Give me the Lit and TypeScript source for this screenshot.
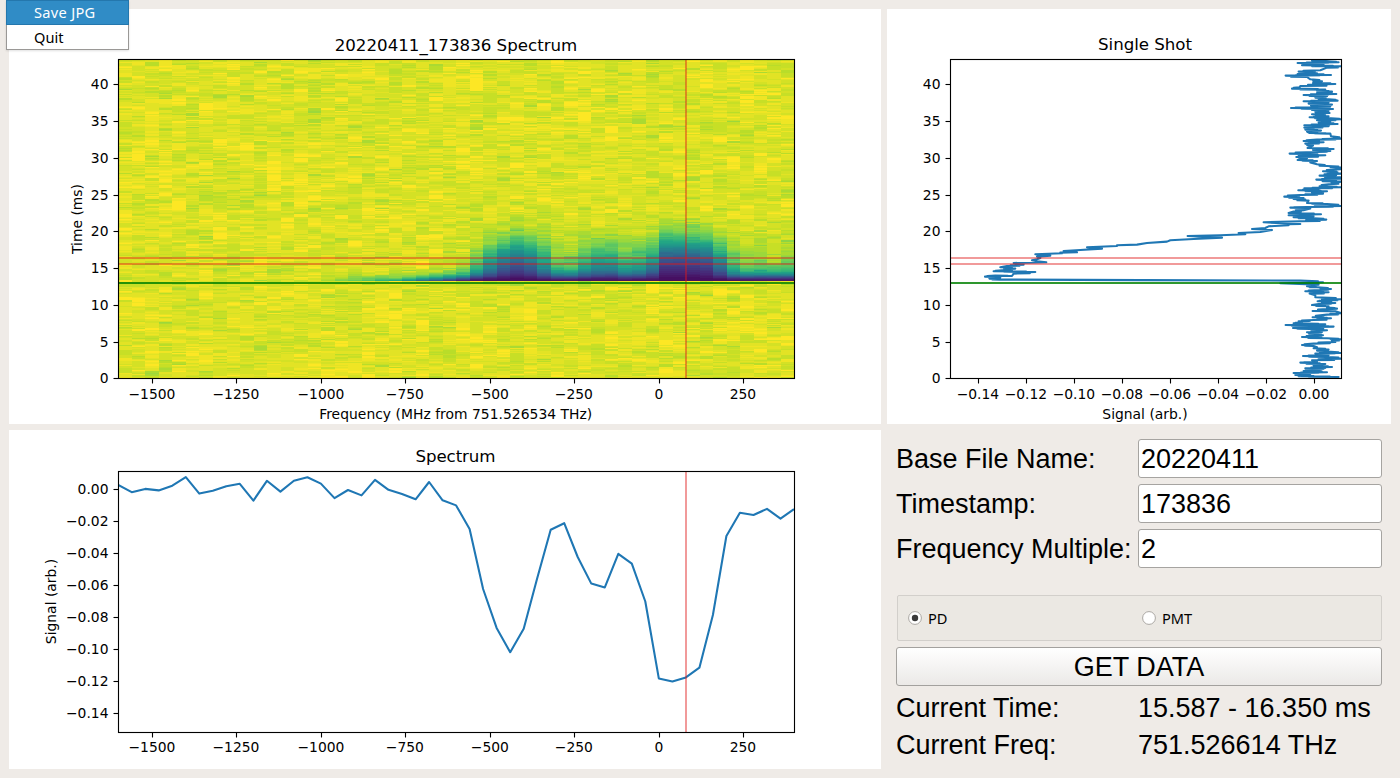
import { LitElement, html, svg, css } from "lit";
import { customElement, property } from "lit/decorators.js";

const VIRIDIS = [
  [68, 1, 84], [72, 35, 116], [64, 67, 135], [52, 94, 141], [41, 120, 142], [32, 144, 140],
  [34, 167, 132], [68, 190, 112], [121, 209, 81], [189, 222, 38], [253, 231, 36],
];

function viridis(v: number): string {
  const p = Math.max(0, Math.min(0.99999, v)) * 10;
  const i = Math.floor(p);
  const f = p - i;
  const c = VIRIDIS[i].map((a, n) => Math.round(a + (VIRIDIS[i + 1][n] - a) * f));
  return `rgb(${c.join(",")})`;
}

// Spectrum trace heights, one per 40 MHz step from -1600 to 400 MHz.
const SPECTRUM_Y = [
  485, 492.2, 488.9, 490.4, 485.7, 477.2, 493.6, 490.7, 486.2, 483.8, 500.6, 480.8, 491.6, 480.8,
  477.3, 483.6, 498.1, 490, 495.4, 479.9, 489.8, 494, 499.3, 482, 500.3, 505.4, 529, 589, 627.9,
  652.2, 628.7, 578.3, 529.7, 523.2, 557, 583.6, 587.4, 553.8, 563.6, 601.5, 678.4, 681.4, 677.4,
  667.7, 615, 536, 512.7, 515, 508.9, 518.7, 509.2,
];
const STEP = 13.516;
const spectrumPath = "M" + SPECTRUM_Y.map((y, k) => `${(118.2 + k * STEP).toFixed(1)} ${y}`).join("L");

// Single shot trace, in thirds of a pixel: upper part, then lower part.
const SHOT_A = `1170,26 1115,31 1160,33 1195,36 1072,38 1150,43 1085,45 1204,48 1160,52 1140,60 1075,64 1130,69
1072,71 1172,74 1036,76 1100,80 1110,87 1145,93 1118,98 1185,101 1080,107 1078,111 1055,115 1155,118 1130,121
1175,124 1130,128 1188,131 1090,134 1160,138 1125,142 1165,147 1192,151 1090,153 1165,157 1105,160 1175,163
1112,166 1170,169 1115,171 1052,173 1178,176 1115,179 1165,182 1125,185 1168,188 1115,192 1165,198 1108,201
1172,204 1204,207 1130,210 1170,214 1135,217 1192,221 1092,225 1165,228 1092,232 1120,236 1095,238 1142,241
1100,244 1108,248 1170,250 1172,258 1204,265 1130,268 1090,272 1150,276 1095,280 1118,286 1102,293 1180,296
1118,299 1170,302 1130,305 1048,310 1155,315 1068,320 1100,324 1072,329 1130,332 1110,337 1130,342 1160,347
1204,352 1200,357 1148,363 1204,370 1138,376 1200,381 1204,385 1128,388 1204,394 1165,402 1138,408 1204,411
1092,414 1135,417 1074,420 1160,423 1115,427 1148,430 1080,434 1032,439 1090,443 1060,446 1105,451 1100,458
1160,461 1204,467 1100,470 1050,472 1110,475 1090,480`;
const SHOT_B = `1060,4 1045,8 1142,12 1045,15 1120,18 1060,21 1120,24 1158,28 1080,33 970,36 1080,41 1035,42 1045,45
985,48 975,53 935,56 995,59 960,65 895,68 915,72 840,75 742,77 845,82 760,86 690,90 680,94 620,98 590,103
530,105 530,107 440,111 485,115 420,119 370,122 410,126 360,127 365,129 285,132 330,136 290,139 300,143 290,147
275,150 290,153 318,156 220,158 250,163 200,167 180,171 225,175 185,180 160,183 285,185 220,190 215,197 165,196
134,199 180,202 148,205 180,208 600,209.5 1080,211 1148,216 1020,219 1135,223 1100,228 1130,231 1172,236
1140,239 1095,243 1165,246 1108,250 1125,255 1125,261 1204,267 1155,270 1132,273 1185,278 1135,281 1115,284
1165,288 1160,292 1190,295 1117,302 1185,303 1204,309 1160,313 1117,321 1172,324 1120,329 1075,333 1085,336
1060,339 1155,342 1036,344 1110,347 1180,349 1058,353 1110,356 1160,360 1100,366 1125,371 1148,375 1085,380
1160,384 1204,387 1175,391 1185,395 1120,400 1085,404 1120,407 1130,411 1120,414 1165,418 1130,421 1160,424
1204,428 1125,430 1165,435 1088,437 1160,440 1204,445 1115,450 1130,455 1080,457 1155,461 1120,466 1175,470
1095,474 1150,476 1115,479 1090,482 1160,486 1060,488 1110,491 1065,494 1120,497 1075,498 1195,500 1130,505`;
const toPx = (s: string, oy: number) =>
  s.trim().split(/\s+/).map((p) => {
    const [x, y] = p.split(",").map(Number);
    return [940.3 + x / 3, oy + y / 3];
  });

// Between two far-apart noise samples the trace doubles back once.
function jitter(pts: number[][]): number[][] {
  const out: number[][] = [];
  pts.forEach(([x, y], i) => {
    out.push([x, y]);
    const next = pts[i + 1];
    if (!next) return;
    const dx = next[0] - x;
    const dy = next[1] - y;
    const noisy = (x > 1284 && next[0] > 1284) || (x < 1040 && next[0] < 1040);
    if (noisy && Math.abs(dx) > 7) {
      out.push([x + dx * 0.78, y + dy * 0.4], [x + dx * 0.25, y + dy * 0.8]);
    }
  });
  return out;
}
const shotPath = "M" + jitter([...toPx(SHOT_A, 50.3), ...toPx(SHOT_B, 210.3)])
  .map(([x, y]) => `${x.toFixed(1)} ${y.toFixed(1)}`).join("L");

// Waterfall cells: noisy baseline plus an absorption that relaxes after the 13.3 ms pulse.
function heatCells() {
  let seed = 20220411;
  const rnd = () => {
    seed = (seed * 1664525 + 1013904223) >>> 0;
    return seed / 4294967296;
  };
  const gauss = () => rnd() + rnd() + rnd() + rnd() - 2;
  const LEVELS = 48;
  const paths: string[] = Array.from({ length: LEVELS }, () => "");
  for (let k = 0; k < 50; k++) {
    const a = Math.max(0, (489.5 - SPECTRUM_Y[k]) / -1600);
    const base = k < 24 ? 0 : Math.min(0.93, Math.max(0, a - 0.003) / 0.137);
    const tau16 = -Math.log(1 - base);
    const burst = k < 15 ? 0 : k < 26 ? 0.15 * Math.exp((k - 15) * 0.3) : 4;
    const xa = Math.round(118.4 + k * STEP);
    const xb = Math.round(118.4 + (k + 1) * STEP);
    let slow = 0;
    let held = 0;
    for (let y = 59; y < 379; y++) {
      const t = (378 - y) / 7.34;
      if (rnd() < 0.6) held = gauss();
      slow = slow * 0.86 + gauss() * 0.5;
      let v = 0.947 + held * 0.044 + slow * 0.026;
      if (t > 13.25) {
        const dt = t - 13.25;
        const fast = burst * Math.exp(-dt / 0.42);
        const tau =
          tau16 * Math.exp(-0.059 * (dt * dt - 7.3)) + fast + (k > 25 ? 0.3 * Math.exp(-dt / 2) : 0);
        const floor = 0.03 + 0.1 * Math.exp(-fast) * Math.min(1, dt / 3);
        v = v * Math.exp(-tau) + floor * (1 - Math.exp(-tau));
      }
      const q = Math.max(0, Math.min(LEVELS - 1, Math.round(v * (LEVELS - 1))));
      paths[q] += `M${xa} ${y}h${xb - xa}v1h${xa - xb}z`;
    }
  }
  return paths.map((d, q) => (d ? svg`<path d=${d} fill=${viridis(q / (LEVELS - 1))} />` : null));
}

type Tick = [number, string];
interface Frame { l: number; t: number; r: number; b: number; drop: number; }

function axes(f: Frame, xs: Tick[], ys: Tick[]) {
  return svg`
    <rect class="spine" x=${f.l + 0.5} y=${f.t + 0.5} width=${f.r - f.l} height=${f.b - f.t} />
    ${xs.map(([x, s]) => svg`
      <path class="spine" d="M${x} ${f.b + 1}v4.5" />
      <text class="tick" x=${x - 0.6} y=${f.b + f.drop} text-anchor="middle">${s}</text>`)}
    ${ys.map(([y, s]) => svg`
      <path class="spine" d="M${f.l} ${y}h-4.5" />
      <text class="tick" x=${f.l - 9.5} y=${y + 4.8} text-anchor="end">${s}</text>`)}`;
}

const FREQ: Tick[] = [
  [152.5, "−1500"], [236.5, "−1250"], [321.5, "−1000"], [405.5, "−750"],
  [490.5, "−500"], [574.5, "−250"], [659.5, "0"], [743.5, "250"],
];
const TIME: Tick[] = [
  [378.5, "0"], [342.5, "5"], [305.5, "10"], [268.5, "15"], [231.5, "20"],
  [195.5, "25"], [158.5, "30"], [121.5, "35"], [84.5, "40"],
];
const AMPL: Tick[] = [0, 2, 4, 6, 8, 10, 12, 14].map(
  (n) => [489.5 + n * 16, (n ? "−" : "") + (n / 100).toFixed(2)] as Tick);
const SHOT_X: Tick[] = [14, 12, 10, 8, 6, 4, 2, 0].map(
  (n) => [1314.5 - n * 24, (n ? "−" : "") + (n / 100).toFixed(2)] as Tick);

@customElement("lab-plot")
class LabPlot extends LitElement {
  @property() kind = "waterfall";

  static styles = css`
    :host { display: block; background: #fff; overflow: hidden; }
    svg { display: block; width: 100%; height: 100%; }
    text { font-family: "DejaVu Sans", sans-serif; fill: #000; }
    .tick, .label { font-size: 13.89px; }
    .title { font-size: 16.67px; }
    .spine { fill: none; stroke: #000; stroke-width: 1.11; }
    .trace { fill: none; stroke: #1f77b4; stroke-width: 2.08; stroke-linejoin: round; }
    .mark { stroke: #e01818; stroke-opacity: 0.44; stroke-width: 2; }
    .pulse { stroke: #008000; stroke-opacity: 0.82; stroke-width: 2; }
  `;

  render() {
    if (this.kind === "shot") {
      return html`<svg viewBox="887 9 504 415">
        <clipPath id="c"><rect x="950.5" y="59.5" width="391" height="319" /></clipPath>
        <g clip-path="url(#c)">
          <path class="trace" d=${shotPath} />
          <path class="mark" d="M950 258H1342" /><path class="mark" d="M950 264H1342" />
          <path class="pulse" d="M950 283H1342" />
        </g>
        ${axes({ l: 950, t: 59, r: 1341, b: 378, drop: 21 }, SHOT_X, TIME)}
        <text class="title" x="1145" y="50" text-anchor="middle" textLength="94">Single Shot</text>
        <text class="label" x="1145" y="419" text-anchor="middle">Signal (arb.)</text>
      </svg>`;
    }
    if (this.kind === "spectrum") {
      return html`<svg viewBox="9 430 872 339">
        <clipPath id="c"><rect x="118.5" y="471.5" width="676" height="261" /></clipPath>
        <g clip-path="url(#c)">
          <path class="trace" d=${spectrumPath} />
          <path class="mark" d="M686 471V733" />
        </g>
        ${axes({ l: 118, t: 471, r: 794, b: 732, drop: 20 }, FREQ, AMPL)}
        <text class="title" x="455.5" y="462" text-anchor="middle" textLength="80">Spectrum</text>
        <text class="label" transform="translate(56 601.5) rotate(-90)" text-anchor="middle">Signal (arb.)</text>
      </svg>`;
    }
    return html`<svg viewBox="9 9 872 415">
      <clipPath id="c"><rect x="118" y="59" width="677" height="320" /></clipPath>
      <g clip-path="url(#c)">
        <g shape-rendering="crispEdges">${heatCells()}</g>
        <path class="mark" d="M118 258H795" /><path class="mark" d="M118 264H795" />
        <path class="mark" d="M686 59V379" />
        <path class="pulse" d="M118 283H795" />
      </g>
      ${axes({ l: 118, t: 59, r: 794, b: 378, drop: 21 }, FREQ, TIME)}
      <text class="title" x="456" y="51" text-anchor="middle">20220411_173836 Spectrum</text>
      <text class="label" x="455.7" y="419" text-anchor="middle" textLength="273">Frequency (MHz from 751.526534 THz)</text>
      <text class="label" transform="translate(82 219) rotate(-90)" text-anchor="middle">Time (ms)</text>
    </svg>`;
  }
}

@customElement("control-panel")
class ControlPanel extends LitElement {
  static styles = css`
    :host {
      display: block; box-sizing: border-box; padding: 9px 9px 0;
      font: 27px/31px "Liberation Sans", Arial, sans-serif; color: #000;
    }
    .form { display: grid; grid-template-columns: 242px 244px; row-gap: 6px; align-items: center; white-space: nowrap; }
    .form span { padding-top: 1px; margin-bottom: -1px; }
    .status span { padding-top: 0; margin-bottom: 0; }
    input {
      box-sizing: border-box; width: 100%; height: 39px; margin: 0; padding: 1px 2px 0;
      font: inherit; color: inherit; background: #fff; border: 1px solid #a6a4a1;
      border-radius: 3px; outline: none;
    }
    .source {
      display: grid; grid-template-columns: 234px 1fr; align-items: center; box-sizing: border-box;
      height: 46px; margin: 27px 0 6px 1px; padding: 0 10px; border: 1px solid #d2cfcb;
      border-radius: 2px; background: #ebe8e3; font: 14.6px/18px "Noto Sans", sans-serif;
    }
    .option { display: flex; align-items: center; gap: 6px; }
    .dot { display: block; width: 14px; height: 14px; }
    .get {
      display: block; box-sizing: border-box; width: 100%; height: 39px; padding: 1px 0 0; font: inherit;
      color: #000; background: linear-gradient(#fff, #ebe9e7); border: 1px solid #a3a19e; border-radius: 3px;
    }
    .status { margin-top: 7px; }
  `;

  private radio(label: string, on: boolean) {
    return html`<div class="option">
      <svg class="dot" viewBox="0 0 14 14">
        <circle cx="7" cy="7" r="6.4" fill="#fff" stroke="#aaa7a3" />
        ${on ? svg`<circle cx="7" cy="7" r="3.2" fill="#3a3a3a" />` : null}
      </svg><span>${label}</span>
    </div>`;
  }

  render() {
    return html`
      <div class="form">
        <span>Base File Name:</span><input .value=${"20220411"} />
        <span>Timestamp:</span><input .value=${"173836"} />
        <span>Frequency Multiple:</span><input .value=${"2"} />
      </div>
      <div class="source">${this.radio("PD", true)}${this.radio("PMT", false)}</div>
      <button class="get">GET DATA</button>
      <div class="form status">
        <span>Current Time:</span><span>15.587 - 16.350 ms</span>
        <span>Current Freq:</span><span>751.526614 THz</span>
      </div>`;
  }
}

@customElement("app-root")
class AppRoot extends LitElement {
  static styles = css`
    :host { display: block; position: relative; width: 1400px; height: 778px; background: #efebe7; overflow: hidden; }
    .page {
      display: grid; box-sizing: border-box; height: 100%; padding: 9px; gap: 6px;
      grid-template-columns: 872px 504px; grid-template-rows: 415px 339px;
    }
    .menu {
      position: absolute; left: 6px; top: 0; box-sizing: border-box; width: 123px; height: 50px;
      border: 1px solid #9a9896; border-top: 0; background: #fff;
      font: 14.6px/25px "Noto Sans", sans-serif; color: #000; box-shadow: 0 1px 2px rgba(0, 0, 0, 0.12);
    }
    .item { box-sizing: border-box; height: 24px; padding-left: 27px; }
    .item.active {
      height: 25px; margin: 0 -1px; color: #fff; background: #308cc6;
      border: 1px solid #2477ad; letter-spacing: 0.3px;
    }
    .item.active span { display: block; margin-top: -1px; }
  `;

  render() {
    return html`
      <div class="page">
        <lab-plot kind="waterfall"></lab-plot>
        <lab-plot kind="shot"></lab-plot>
        <lab-plot kind="spectrum"></lab-plot>
        <control-panel></control-panel>
      </div>
      <div class="menu">
        <div class="item active"><span>Save JPG</span></div>
        <div class="item">Quit</div>
      </div>`;
  }
}
